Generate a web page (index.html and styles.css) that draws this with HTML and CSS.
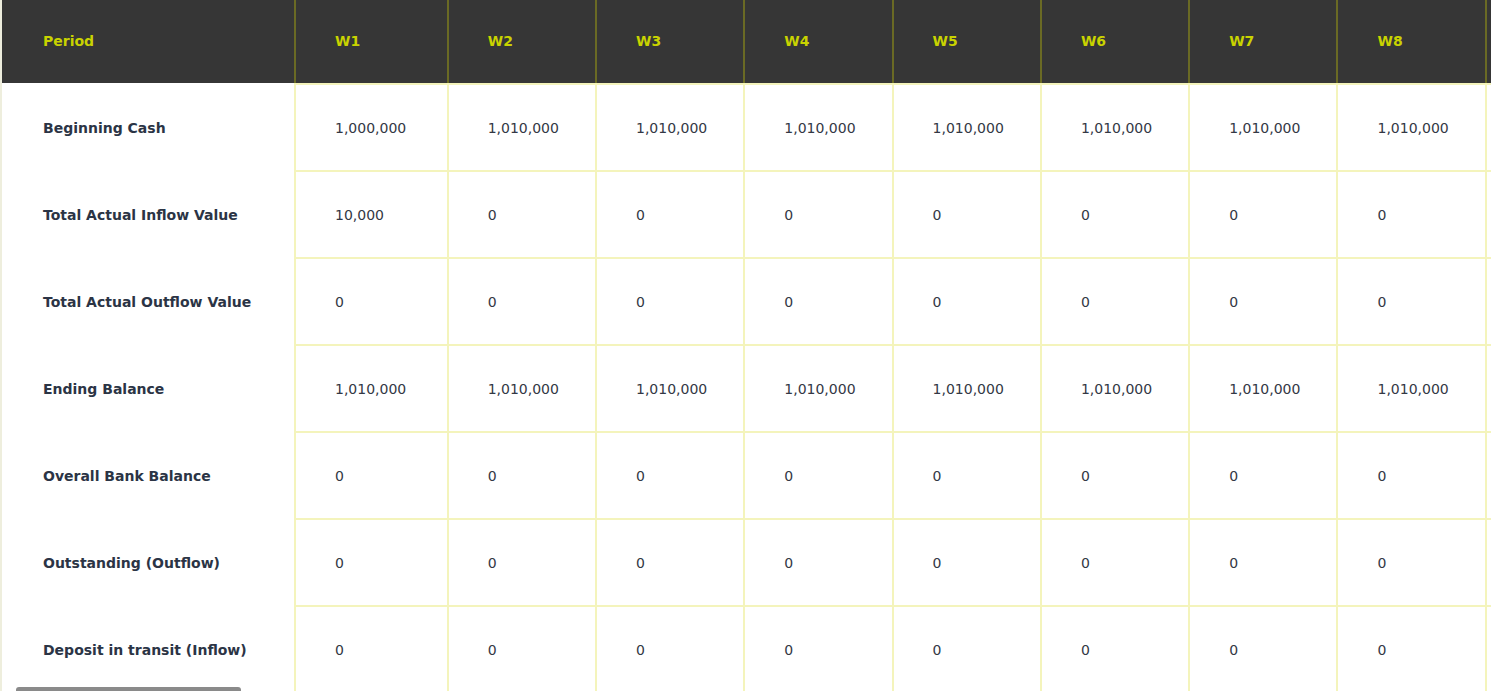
FILE: index.html
```html
<!DOCTYPE html>
<html lang="en">
<head>
<meta charset="utf-8">
<title>Cash Flow</title>
<link rel="stylesheet" href="styles.css">
</head>
<body>
<div class="wrap">
  <table class="grid">
    <colgroup>
      <col class="c-label">
      <col class="c-w1">
      <col class="c-w"><col class="c-w"><col class="c-w"><col class="c-w"><col class="c-w"><col class="c-w"><col class="c-w">
      <col class="c-rest">
    </colgroup>
    <thead>
      <tr>
        <th class="lbl">Period</th>
        <th>W1</th><th>W2</th><th>W3</th><th>W4</th><th>W5</th><th>W6</th><th>W7</th><th>W8</th><th class="rest"></th>
      </tr>
    </thead>
    <tbody>
      <tr>
        <td class="lbl">Beginning Cash</td>
        <td>1,000,000</td><td>1,010,000</td><td>1,010,000</td><td>1,010,000</td><td>1,010,000</td><td>1,010,000</td><td>1,010,000</td><td>1,010,000</td><td class="rest"></td>
      </tr>
      <tr>
        <td class="lbl">Total Actual Inflow Value</td>
        <td>10,000</td><td>0</td><td>0</td><td>0</td><td>0</td><td>0</td><td>0</td><td>0</td><td class="rest"></td>
      </tr>
      <tr>
        <td class="lbl">Total Actual Outflow Value</td>
        <td>0</td><td>0</td><td>0</td><td>0</td><td>0</td><td>0</td><td>0</td><td>0</td><td class="rest"></td>
      </tr>
      <tr>
        <td class="lbl">Ending Balance</td>
        <td>1,010,000</td><td>1,010,000</td><td>1,010,000</td><td>1,010,000</td><td>1,010,000</td><td>1,010,000</td><td>1,010,000</td><td>1,010,000</td><td class="rest"></td>
      </tr>
      <tr>
        <td class="lbl">Overall Bank Balance</td>
        <td>0</td><td>0</td><td>0</td><td>0</td><td>0</td><td>0</td><td>0</td><td>0</td><td class="rest"></td>
      </tr>
      <tr>
        <td class="lbl">Outstanding (Outflow)</td>
        <td>0</td><td>0</td><td>0</td><td>0</td><td>0</td><td>0</td><td>0</td><td>0</td><td class="rest"></td>
      </tr>
      <tr>
        <td class="lbl">Deposit in transit (Inflow)</td>
        <td>0</td><td>0</td><td>0</td><td>0</td><td>0</td><td>0</td><td>0</td><td>0</td><td class="rest"></td>
      </tr>
    </tbody>
  </table>
  <div class="scroll-thumb"></div>
</div>
</body>
</html>
```

FILE: styles.css
```css
html, body {
  margin: 0;
  padding: 0;
  background: #ffffff;
  overflow: hidden;
}

body {
  font-family: "DejaVu Sans", "Noto Sans", sans-serif;
  font-size: 14px;
  color: #2e3440;
}

.wrap {
  position: relative;
  height: 691px;
  overflow: hidden;
  border-left: 2px solid #eeeedd;
}

.grid {
  border-collapse: separate;
  border-spacing: 0;
  table-layout: fixed;
  width: 1502.8px;
}

.c-label { width: 292px; }
.c-w1 { width: 152.7px; }
.c-w { width: 148.3px; }
.c-rest { width: 20px; }

.grid th {
  height: 83px;
  padding: 0 0 0 39px;
  background: #363636;
  color: #c9d300;
  font-weight: 700;
  font-size: 14px;
  text-align: left;
  border-left: 2px solid #6a6a24;
  box-sizing: border-box;
  padding-bottom: 2px;
}

.grid th.lbl {
  border-left: none;
  padding-left: 41px;
}

.grid td {
  height: 87px;
  box-sizing: border-box;
  padding: 0 0 0 39px;
  border-left: 2px solid #f4f4bc;
  border-top: 2px solid #f4f4bc;
  font-weight: 400;
  color: #333845;
  text-align: left;
  vertical-align: middle;
  white-space: nowrap;
}

.grid td.lbl {
  border: none;
  padding-top: 2px;
  padding-left: 41px;
  font-weight: 700;
  color: #2b3445;
}

.grid .rest {
  padding: 0;
}

.scroll-thumb {
  position: absolute;
  left: 14px;
  top: 687px;
  width: 225px;
  height: 6px;
  border-radius: 3px;
  background: #8a8a8a;
}
```
